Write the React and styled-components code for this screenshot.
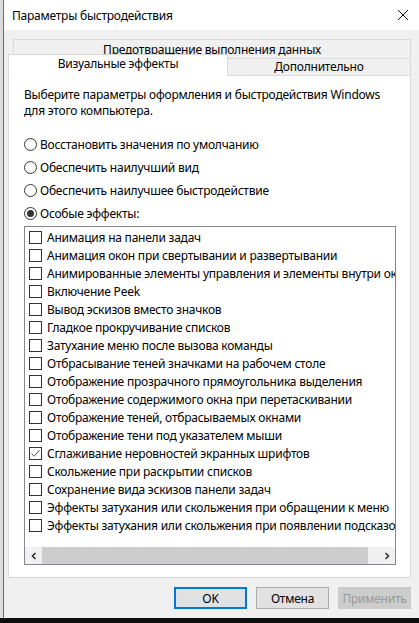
import React from "react"
import styled, { createGlobalStyle } from "styled-components"

const GlobalStyle = createGlobalStyle`
  html, body {
    margin: 0;
    padding: 0;
    background: #1b1b1b;
  }
  body {
    font-family: "Noto Sans", "Open Sans", sans-serif;
    font-size: 12px;
    letter-spacing: -0.23px;
    color: #000;
  }
`

const Screen = styled.div`
  width: 419px;
  height: 623px;
  display: flex;
  flex-direction: column;
  overflow: hidden;
  background: #0d0d0d;
`

const Desk = styled.div`
  display: flex;
  height: 618px;
  background: #dcdcdc;
`

const Window = styled.div`
  flex: 1;
  margin-left: 3px;
  border-left: 1px solid #6b6b6b;
  display: flex;
  flex-direction: column;
  background: #f0f0f0;
`

const TitleBar = styled.div`
  height: 30px;
  background: #fff;
  display: flex;
  align-items: center;
  justify-content: space-between;
  padding: 0 8px;
  flex-shrink: 0;
`

const Title = styled.span`
  font-size: 12px;
`

const Close = styled.svg`
  width: 12px;
  height: 12px;
  margin-right: 2px;
`

const Body = styled.div`
  flex: 1;
  display: flex;
  flex-direction: column;
  padding: 9px 8px 0 4px;
`

const BackRow = styled.div`
  height: 18px;
  margin-left: 5px;
  border: 1px solid #d9d9d9;
  border-bottom: none;
  display: flex;
  align-items: center;
  justify-content: center;
  background: #f0f0f0;
`

const FrontRow = styled.div`
  display: flex;
  align-items: flex-end;
  margin-top: -4px;
  position: relative;
  z-index: 1;
`

const Tab = styled.div`
  display: flex;
  align-items: center;
  justify-content: center;
  box-sizing: border-box;
  width: ${p => p.$w}px;
  height: ${p => (p.$active ? 22 : 18)}px;
  border: 1px solid #d9d9d9;
  border-bottom: ${p => (p.$active ? "1px solid #fff" : "1px solid #d9d9d9")};
  background: ${p => (p.$active ? "#fff" : "#f0f0f0")};
  padding-bottom: ${p => (p.$active ? 4 : 1)}px;
  margin-bottom: -1px;
  ${p => (p.$active ? "" : "border-left: none;")}
`

const Panel = styled.div`
  height: 503px;
  box-sizing: border-box;
  background: #fff;
  border: 1px solid #d9d9d9;
  padding: 11px 0 0 15px;
  display: flex;
  flex-direction: column;
`

const Intro = styled.p`
  margin: 0;
  line-height: 16px;
`

const Radios = styled.div`
  margin-top: 14px;
  display: flex;
  flex-direction: column;
`

const RadioRow = styled.label`
  display: flex;
  align-items: center;
  height: 23px;
  gap: 3px;
`

const RadioCircle = styled.span`
  width: 13px;
  height: 13px;
  box-sizing: border-box;
  border: 1px solid #333;
  border-radius: 50%;
  display: flex;
  align-items: center;
  justify-content: center;
  &::after {
    content: "";
    width: 7px;
    height: 7px;
    border-radius: 50%;
    background: ${p => (p.$on ? "#333" : "transparent")};
  }
`

const ListBox = styled.div`
  margin-top: 1px;
  width: 372px;
  height: 339px;
  box-sizing: border-box;
  border: 1px solid #828790;
  display: flex;
  flex-direction: column;
  overflow: hidden;
`

const Items = styled.div`
  flex: 1;
  padding: 1px 0 0 4px;
  overflow: hidden;
`

const Item = styled.div`
  display: flex;
  align-items: center;
  height: 18px;
  gap: 5px;
  white-space: nowrap;
`

const Box = styled.span`
  width: 13px;
  height: 13px;
  flex-shrink: 0;
  box-sizing: border-box;
  border: 1px solid #333;
  display: flex;
  align-items: center;
  justify-content: center;
  background: #fff;
`

const HScroll = styled.div`
  height: 17px;
  display: flex;
  background: #f0f0f0;
  flex-shrink: 0;
`

const Arrow = styled.div`
  width: 17px;
  display: flex;
  align-items: center;
  justify-content: center;
  background: #f0f0f0;
`

const Track = styled.div`
  flex: 1;
  display: flex;
`

const Thumb = styled.div`
  width: 326px;
  background: #cdcdcd;
`

const Buttons = styled.div`
  display: flex;
  justify-content: flex-end;
  gap: 9px;
  margin-top: 9px;
`

const Button = styled.div`
  width: 73px;
  height: 22px;
  box-sizing: border-box;
  display: flex;
  align-items: center;
  justify-content: center;
  background: ${p => (p.$disabled ? "#cccccc" : "#e1e1e1")};
  color: ${p => (p.$disabled ? "#9a9a9a" : "#000")};
  border: ${p => (p.$primary ? "2px solid #0078d7" : p.$disabled ? "1px solid #cccccc" : "1px solid #adadad")};
`

const items = [
  "Анимация на панели задач",
  "Анимация окон при свертывании и развертывании",
  "Анимированные элементы управления и элементы внутри окна",
  "Включение Peek",
  "Вывод эскизов вместо значков",
  "Гладкое прокручивание списков",
  "Затухание меню после вызова команды",
  "Отбрасывание теней значками на рабочем столе",
  "Отображение прозрачного прямоугольника выделения",
  "Отображение содержимого окна при перетаскивании",
  "Отображение теней, отбрасываемых окнами",
  "Отображение тени под указателем мыши",
  "Сглаживание неровностей экранных шрифтов",
  "Скольжение при раскрытии списков",
  "Сохранение вида эскизов панели задач",
  "Эффекты затухания или скольжения при обращении к меню",
  "Эффекты затухания или скольжения при появлении подсказок",
]

const checked = ["Сглаживание неровностей экранных шрифтов"]

const radios = [
  "Восстановить значения по умолчанию",
  "Обеспечить наилучший вид",
  "Обеспечить наилучшее быстродействие",
  "Особые эффекты:",
]

const App = () => {
  return (
    <Screen>
      <GlobalStyle />
      <Desk>
        <Window>
          <TitleBar>
            <Title>Параметры быстродействия</Title>
            <Close viewBox="0 0 12 12">
              <path d="M1 1 L11 11 M11 1 L1 11" stroke="#111" strokeWidth="1" />
            </Close>
          </TitleBar>
          <Body>
            <BackRow>Предотвращение выполнения данных</BackRow>
            <FrontRow>
              <Tab $active $w={220}>Визуальные эффекты</Tab>
              <Tab $w={183}>Дополнительно</Tab>
            </FrontRow>
            <Panel>
              <Intro>
                Выберите параметры оформления и быстродействия Windows
                <br />
                для этого компьютера.
              </Intro>
              <Radios>
                {radios.map((r, i) => (
                  <RadioRow key={r}>
                    <RadioCircle $on={i === 3} />
                    {r}
                  </RadioRow>
                ))}
              </Radios>
              <ListBox>
                <Items>
                  {items.map(t => (
                    <Item key={t}>
                      <Box>
                        {checked.includes(t) && (
                          <svg width="11" height="11" viewBox="0 0 11 11">
                            <path d="M1.5 5.5 L4.2 8.3 L9.5 2" fill="none" stroke="#555" strokeWidth="1" />
                          </svg>
                        )}
                      </Box>
                      {t}
                    </Item>
                  ))}
                </Items>
                <HScroll>
                  <Arrow>
                    <svg width="8" height="8" viewBox="0 0 8 8">
                      <path d="M5.5 1 L2.5 4 L5.5 7" fill="none" stroke="#333" strokeWidth="1.6" />
                    </svg>
                  </Arrow>
                  <Track>
                    <Thumb />
                  </Track>
                  <Arrow>
                    <svg width="8" height="8" viewBox="0 0 8 8">
                      <path d="M2.5 1 L5.5 4 L2.5 7" fill="none" stroke="#333" strokeWidth="1.6" />
                    </svg>
                  </Arrow>
                </HScroll>
              </ListBox>
            </Panel>
            <Buttons>
              <Button $primary>OK</Button>
              <Button>Отмена</Button>
              <Button $disabled>Применить</Button>
            </Buttons>
          </Body>
        </Window>
      </Desk>
    </Screen>
  )
}

export default App
